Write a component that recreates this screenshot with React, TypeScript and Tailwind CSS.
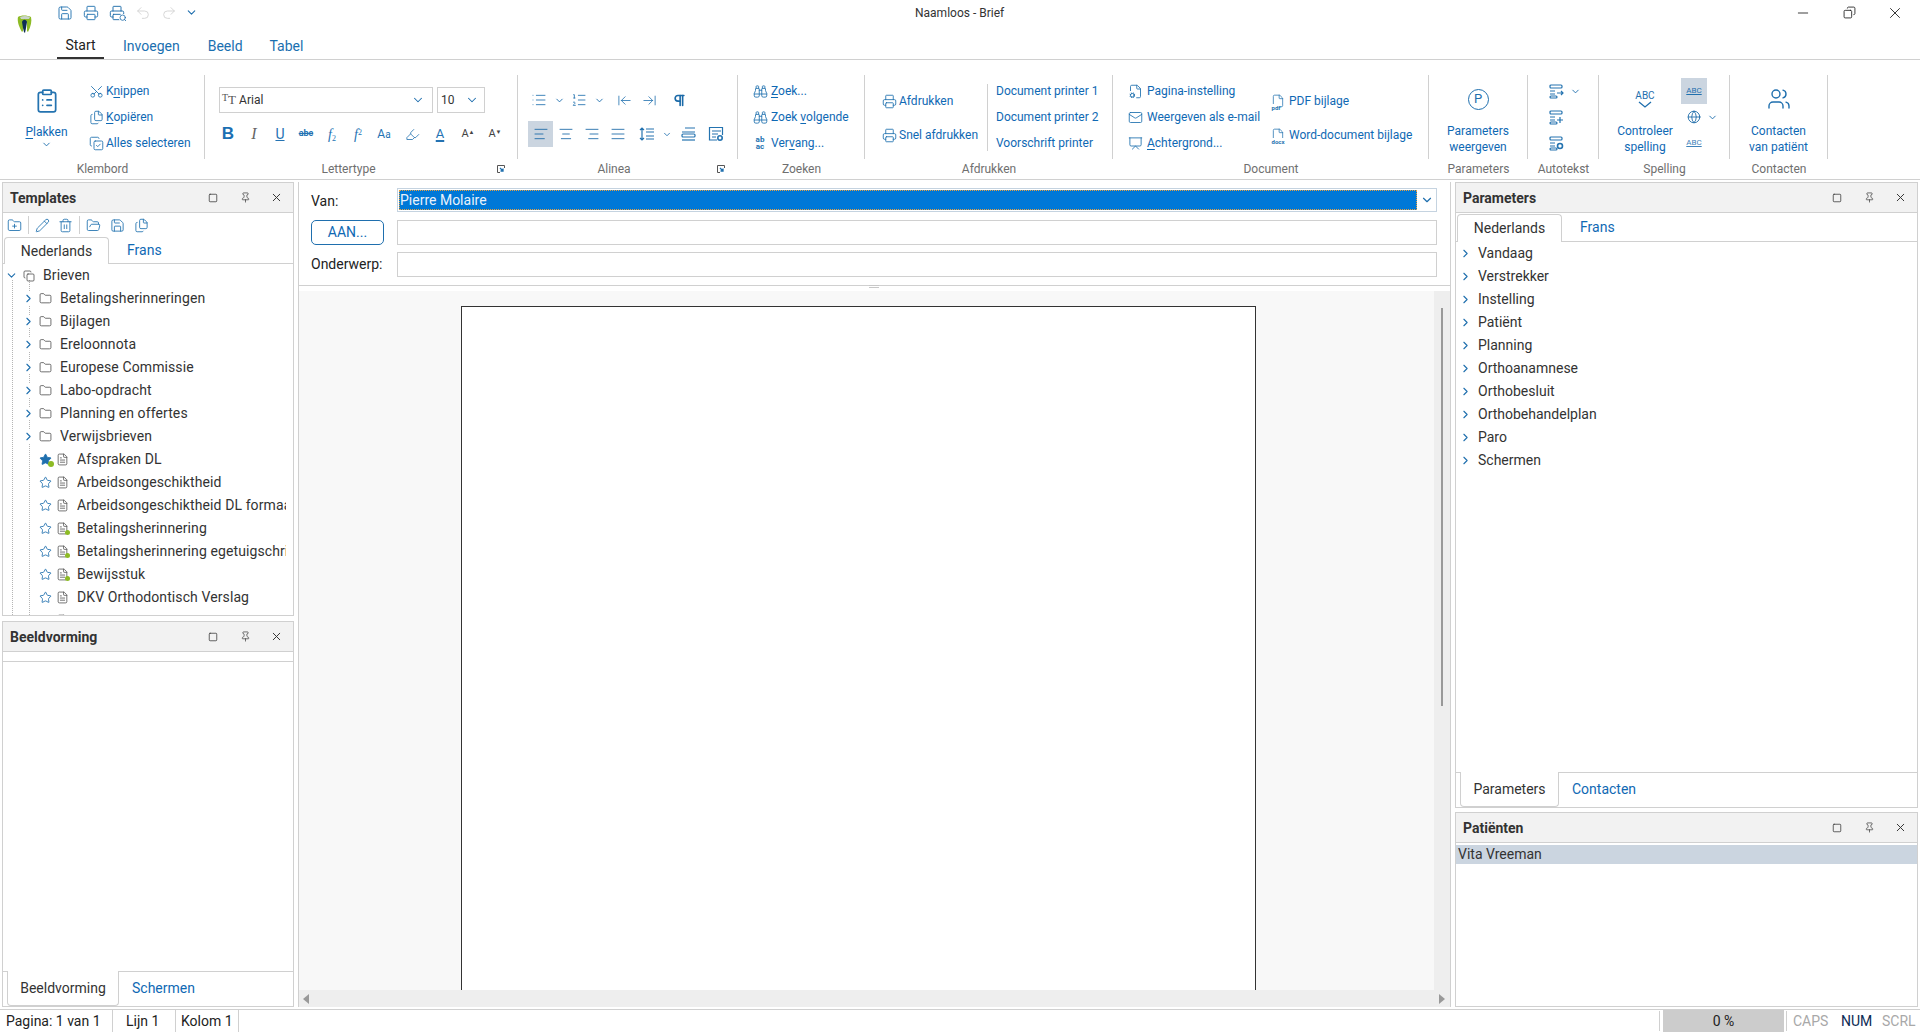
import type { ReactNode } from 'react';
import {
  AlignCenter, AlignJustify, AlignLeft, AlignRight, ArrowLeftToLine, ArrowRightToLine, Binoculars, ChevronDown, ChevronRight,
  ClipboardList, Copy, CopyCheck, File, FileCog, FileText, Files, Folder, FolderOpen, FolderPlus, Globe, Highlighter, List,
  ListOrdered, Mail, Minus, Pencil, Pilcrow, Pin, Presentation, Printer, Redo2, Save, Scissors, Search, Square,
  Star, Trash2, Undo2, Users, X,
} from 'lucide-react';

const iconBlue = '#2473b0';

function Logo() {
  return (
    <svg width="16" height="20" viewBox="0 0 16 20">
      <path d="M1 3c3-2 9-2 13 0 1 4 0 9-3 15l-1-1V8H6v9l-1 1C2 13 0 7 1 3z" fill="#8dbb25" />
      <path d="M3 3c3-1.500 7-1.500 10 0l-1 2H4z" fill="#c9d3c9" />
      <path d="M5 8c1-3 4-3 5 0l-1 6-1 5-1-1-1-4z" fill="#0c2c55" />
    </svg>
  );
}

// stacked lines with a small mark behind them, used by autotekst and alinea buttons
function LinesIcon({ mark }: { mark: 'arrow' | 'plus' | 'gear' }) {
  return (
    <svg width="15" height="15" viewBox="0 0 15 15" fill="none" stroke={iconBlue} strokeWidth="1.200">
      <rect x="1" y="1" width="12" height="3" rx="1" />
      <path d="M1 7h5M1 10h5" />
      <rect x="1" y="12" width="7" height="2" rx="1" />
      {mark === 'arrow' && <path d="M8 9h6M12 7l2 2-2 2" />}
      {mark === 'plus' && <path d="M11 7v6M8 10h6" />}
      {mark === 'gear' && <circle cx="11" cy="10" r="2.500" strokeWidth="1.600" />}
    </svg>
  );
}

function LineSpacingIcon() {
  return (
    <svg width="16" height="14" viewBox="0 0 16 14" fill="none" stroke={iconBlue} strokeWidth="1.200">
      <path d="M3 1v12M1 3l2-2 2 2M1 11l2 2 2-2M7 2h8M7 5h8M7 9h8M7 12h8" />
    </svg>
  );
}

function ParaBoxIcon() {
  return (
    <svg width="15" height="14" viewBox="0 0 15 14" fill="none" stroke={iconBlue} strokeWidth="1.200">
      <path d="M4 1h10M1 5h13" />
      <rect x="1" y="7" width="13" height="3" rx="1" />
      <path d="M1 13h13" />
    </svg>
  );
}

function ParaSettingsIcon() {
  return (
    <svg width="16" height="16" viewBox="0 0 16 16" fill="none" stroke={iconBlue} strokeWidth="1.200">
      <path d="M9 14H1.500V1.500h13V9M4 5h9M4 8h6M4 11h4" />
      <circle cx="12" cy="12" r="2.200" strokeWidth="1.600" />
    </svg>
  );
}

function AttachIcon({ tag }: { tag: string }) {
  return (
    <span className="relative w-[15px] h-[15px] flex justify-center">
      <File size={14} color={iconBlue} strokeWidth={1.3} />
      <span className="absolute left-[1px] bottom-[-2px] bg-white text-[6px] leading-[7px] font-bold text-[#2473b0]">{tag}</span>
    </span>
  );
}

function Shortcut({ children }: { children: ReactNode }) {
  return <span className="underline underline-offset-2">{children}</span>;
}

function SmallItem({ icon, children, h = 'h-[26px]', gap = 'mr-[2px]' }: { icon: ReactNode; children: ReactNode; h?: string; gap?: string }) {
  return (
    <div className={`flex items-center ${h} text-[12px] text-[#0f69b4] whitespace-nowrap`}>
      <span className={`w-[16px] flex justify-center ${gap}`}>{icon}</span>
      <span>{children}</span>
    </div>
  );
}

function BigButton({ icon, lines }: { icon: ReactNode; lines: string[] }) {
  return (
    <div className="flex flex-col items-center pt-[12px] text-[12px] leading-[16px] text-[#0f69b4] text-center whitespace-nowrap">
      <div className="h-[24px] flex items-center justify-center mb-[12px]">{icon}</div>
      {lines.map((l) => (
        <div key={l}>{l}</div>
      ))}
    </div>
  );
}

function Launcher() {
  return (
    <svg width="8" height="8" viewBox="0 0 8 8" className="absolute right-[13px] top-[6px]">
      <path d="M7.500 3V.5H.5v7H3" fill="none" stroke="#555" strokeWidth="1" />
      <path d="M3 3l3 3M6 3.500V6H3.500" fill="none" stroke="#1f6fae" strokeWidth="1.300" />
    </svg>
  );
}

function Group({ width, label, children, launcher, labelPad = '' }: { width: string; label: string; children: ReactNode; launcher?: boolean; labelPad?: string }) {
  return (
    <div className={`${width} flex flex-col shrink-0`}>
      <div className="h-[84px] border-r border-[#d0d0d0] flex">{children}</div>
      <div className={`relative h-[20px] flex items-center justify-center text-[12px] text-[#6f6f6f] ${labelPad}`}>
        {label}
        {launcher && <Launcher />}
      </div>
    </div>
  );
}

function Ribbon() {
  const ic = { size: 15, color: iconBlue, strokeWidth: 1.4 };
  const chev = <ChevronDown size={11} color="#1f6fae" strokeWidth={2} />;
  return (
    <div className="h-[120px] border-b border-[#d0d0d0] pt-[15px] flex">
      <Group width="w-[205px]" label="Klembord">
        <div className="w-[90px] flex flex-col items-center pt-[13px] pl-[3px] text-[12px] text-[#0f69b4]">
          <div className="h-[26px] flex items-center">
            <ClipboardList size={26} color={iconBlue} strokeWidth={1.6} />
          </div>
          <div className="mt-[10px] leading-[16px]">
            <Shortcut>P</Shortcut>lakken
          </div>
          <div className="-mt-[1px]">{chev}</div>
        </div>
        <div className="flex flex-col justify-center -ml-[2px]">
          <SmallItem icon={<Scissors {...ic} className="-rotate-90" />}>
            K<Shortcut>n</Shortcut>ippen
          </SmallItem>
          <SmallItem icon={<Files {...ic} />}>
            <Shortcut>K</Shortcut>opiëren
          </SmallItem>
          <SmallItem icon={<CopyCheck {...ic} />}>Alles selecteren</SmallItem>
        </div>
      </Group>

      <Group width="w-[313px]" label="Lettertype" launcher labelPad="pr-[26px]">
        <div className="pl-[14px] pt-[12px]">
          <div className="flex gap-[4px]">
            <div className="w-[214px] h-[26px] border border-[#d0d0d0] flex items-center justify-between pl-[2px] pr-[7px] text-[12px] text-[#333]">
              <span className="flex items-center">
                <span className="font-['Liberation_Serif',serif] text-[#555] text-[13px] mr-[3px]">
                  <span className="text-[10px] align-top">T</span>T
                </span>
                Arial
              </span>
              <ChevronDown size={14} color="#1f6fae" strokeWidth={1.8} />
            </div>
            <div className="w-[48px] h-[26px] border border-[#d0d0d0] flex items-center justify-between pl-[3px] pr-[5px] text-[12px] text-[#333]">
              10
              <ChevronDown size={14} color="#1f6fae" strokeWidth={1.8} />
            </div>
          </div>
          <div className="flex items-center h-[20px] mt-[11px] -ml-[4px] text-[#2473b3]">
            <span className="w-[26px] text-center text-[17px] font-bold font-['Liberation_Sans',sans-serif] text-[#1b70b3]">B</span>
            <span className="w-[26px] text-center text-[16px] italic font-['Liberation_Serif',serif] text-[#666]">I</span>
            <span className="w-[26px] text-center text-[14px] underline text-[#2473b3]">U</span>
            <span className="w-[26px] text-center text-[9px] font-bold line-through">abc</span>
            <span className="w-[26px] text-center text-[14px] italic font-['Liberation_Serif',serif]">
              f<sub className="text-[8px] not-italic">2</sub>
            </span>
            <span className="w-[26px] text-center text-[14px] italic font-['Liberation_Serif',serif]">
              f<sup className="text-[8px] not-italic">2</sup>
            </span>
            <span className="w-[26px] text-center text-[12px]">
              A<span className="text-[10px]">a</span>
            </span>
            <span className="w-[30px] flex justify-center">
              <Highlighter size={15} color={iconBlue} strokeWidth={1.3} />
            </span>
            <span className="w-[26px] text-center text-[13px] underline decoration-2 underline-offset-2">A</span>
            <span className="w-[30px] text-center text-[11px] text-[#444]">
              A<sup className="text-[6px]">▲</sup>
            </span>
            <span className="w-[24px] text-center text-[11px] text-[#444]">
              A<sup className="text-[6px]">▼</sup>
            </span>
          </div>
        </div>
      </Group>

      <Group width="w-[220px]" label="Alinea" launcher labelPad="pr-[28px]">
        <div className="pl-[10px] pt-[12px]">
          <div className="flex items-center h-[26px] -ml-[2px]">
            <span className="w-[26px] flex justify-center"><List size={16} color={iconBlue} strokeWidth={1.3} /></span>
            <span className="w-[14px] flex justify-center">{chev}</span>
            <span className="w-[26px] flex justify-center"><ListOrdered size={16} color={iconBlue} strokeWidth={1.3} /></span>
            <span className="w-[14px] flex justify-center">{chev}</span>
            <span className="w-[26px] flex justify-center ml-[5px]"><ArrowLeftToLine size={15} color={iconBlue} strokeWidth={1.3} /></span>
            <span className="w-[24px] flex justify-center"><ArrowRightToLine size={15} color={iconBlue} strokeWidth={1.3} /></span>
            <span className="w-[36px] flex justify-center"><Pilcrow size={15} color="#1b6aa8" strokeWidth={2.6} /></span>
          </div>
          <div className="flex items-center h-[26px] mt-[8px]">
            <span className="w-[25px] h-[26px] bg-[#cbd5e0] flex items-center justify-center"><AlignLeft size={16} color="#1b6aa8" strokeWidth={1.3} /></span>
            <span className="w-[26px] flex justify-center"><AlignCenter size={16} color="#1b6aa8" strokeWidth={1.3} /></span>
            <span className="w-[26px] flex justify-center"><AlignRight size={16} color="#1b6aa8" strokeWidth={1.3} /></span>
            <span className="w-[26px] flex justify-center"><AlignJustify size={16} color="#1b6aa8" strokeWidth={1.3} /></span>
            <span className="w-[31px] flex justify-center"><LineSpacingIcon /></span>
            <span className="w-[10px] flex justify-center">{chev}</span>
            <span className="w-[32px] flex justify-center"><ParaBoxIcon /></span>
            <span className="w-[24px] flex justify-center"><ParaSettingsIcon /></span>
          </div>
        </div>
      </Group>

      <Group width="w-[127px]" label="Zoeken">
        <div className="flex flex-col justify-center pl-[14px]">
          <SmallItem gap="mr-[3px]" icon={<Binoculars {...ic} />}>
            <Shortcut>Z</Shortcut>oek...
          </SmallItem>
          <SmallItem gap="mr-[3px]" icon={<Binoculars {...ic} />}>
            Zoek <Shortcut>v</Shortcut>olgende
          </SmallItem>
          <SmallItem gap="mr-[3px]" icon={<span className="text-[8px] leading-[7px] font-bold text-[#2473b0] text-center">ab<br />ac</span>}>
            Ver<Shortcut>v</Shortcut>ang...
          </SmallItem>
        </div>
      </Group>

      <Group width="w-[248px]" label="Afdrukken">
        <div className="flex flex-col justify-center pt-[2px] pl-[16px] w-[122px]">
          <SmallItem h="h-[34px]" icon={<Printer {...ic} />}>Afdrukken</SmallItem>
          <SmallItem h="h-[34px]" icon={<Printer {...ic} />}>Snel afdrukken</SmallItem>
        </div>
        <div className="h-[67px] self-center border-l border-[#d0d0d0]" />
        <div className="pl-[8px] flex flex-col justify-center text-[12px] text-[#0f69b4] whitespace-nowrap">
          <div className="h-[26px] flex items-center">Document printer 1</div>
          <div className="h-[26px] flex items-center">Document printer 2</div>
          <div className="h-[26px] flex items-center">Voorschrift printer</div>
        </div>
      </Group>

      <Group width="w-[316px]" label="Document">
        <div className="flex flex-col justify-center pl-[14px] w-[157px]">
          <SmallItem gap="mr-[4px]" icon={<FileCog {...ic} />}>Pagina-instelling</SmallItem>
          <SmallItem gap="mr-[4px]" icon={<Mail {...ic} />}>Weergeven als e-mail</SmallItem>
          <SmallItem gap="mr-[4px]" icon={<Presentation {...ic} />}>
            <Shortcut>A</Shortcut>chtergrond...
          </SmallItem>
        </div>
        <div className="flex flex-col justify-center pt-[2px]">
          <SmallItem h="h-[34px]" gap="mr-[3px]" icon={<AttachIcon tag="pdf" />}>PDF bijlage</SmallItem>
          <SmallItem h="h-[34px]" gap="mr-[3px]" icon={<AttachIcon tag="docx" />}>Word-document bijlage</SmallItem>
        </div>
      </Group>

      <Group width="w-[99px]" label="Parameters">
        <div className="w-full">
          <BigButton
            icon={
              <span className="w-[21px] h-[21px] rounded-full border-[1.5px] border-[#1f6fae] flex items-center justify-center text-[13px] text-[#1f6fae]">P</span>
            }
            lines={['Parameters', 'weergeven']}
          />
        </div>
      </Group>

      <Group width="w-[71px]" label="Autotekst">
        <div className="flex flex-col justify-center pl-[21px]">
          <div className="h-[26px] flex items-center gap-[6px]">
            <LinesIcon mark="arrow" />
            {chev}
          </div>
          <div className="h-[26px] flex items-center">
            <LinesIcon mark="plus" />
          </div>
          <div className="h-[26px] flex items-center">
            <LinesIcon mark="gear" />
          </div>
        </div>
      </Group>

      <Group width="w-[131px]" label="Spelling">
        <div className="w-[92px] -mr-[10px]">
          <BigButton
            icon={
              <span className="flex flex-col items-center text-[10px] leading-[10px] text-[#1f6fae]">
                ABC
                <svg width="14" height="7" viewBox="0 0 14 7">
                  <path d="M1 1l6 5 6-5" fill="none" stroke="#1f6fae" strokeWidth="1.300" />
                </svg>
              </span>
            }
            lines={['Controleer', 'spelling']}
          />
        </div>
        <div className="flex flex-col justify-center">
          <div className="w-[26px] h-[26px] bg-[#cbd5e0] flex items-center justify-center text-[8px] text-[#1f6fae] underline">ABC</div>
          <div className="h-[26px] flex items-center gap-[6px] pl-[6px] w-[44px]">
            <Globe size={14} color="#1b6aa8" strokeWidth={1.5} />
            {chev}
          </div>
          <div className="w-[26px] h-[26px] flex items-center justify-center text-[8px] text-[#3f83ba] underline">ABC</div>
        </div>
      </Group>

      <Group width="w-[98px]" label="Contacten">
        <div className="w-full">
          <BigButton icon={<Users size={24} color="#1f6fae" strokeWidth={1.4} />} lines={['Contacten', 'van patiënt']} />
        </div>
      </Group>
    </div>
  );
}

function PanelHeader({ title }: { title: string }) {
  return (
    <div className="h-[30px] shrink-0 bg-[#f2f2f2] border-b border-[#d0d0d0] flex items-center pl-[7px] text-[14px] font-bold text-[#333]">
      <span className="flex-1 pt-[1px]">{title}</span>
      <span className="w-[32px] flex justify-center"><Square size={10} color="#333" strokeWidth={1.8} /></span>
      <span className="w-[32px] flex justify-center"><Pin size={11} color="#333" strokeWidth={1.5} /></span>
      <span className="w-[32px] pr-[1px] flex justify-center"><X size={13} color="#333" strokeWidth={1.8} /></span>
    </div>
  );
}

function TopTabs({ active, other, tall }: { active: string; other: string; tall?: boolean }) {
  return (
    <div className={`${tall ? 'h-[29px]' : 'h-[27px]'} shrink-0 flex items-end border-b border-[#d0d0d0] text-[14px] pl-[1px]`}>
      <div className={`w-[105px] ${tall ? 'h-[28px]' : 'h-[27px]'} -mb-[1px] bg-white border border-b-0 border-[#d0d0d0] rounded-t-[4px] flex items-center justify-center text-[#333]`}>{active}</div>
      <div className={`${tall ? 'h-[27px]' : 'h-[26px]'} pl-[18px] flex items-center text-[#0f69b4]`}>{other}</div>
    </div>
  );
}

function BottomTabs({ active, other, w }: { active: string; other: string; w: string }) {
  return (
    <div className="h-[35px] shrink-0 flex items-start border-t border-[#d0d0d0] text-[14px] pl-[4px]">
      <div className={`${w} h-[35px] -mt-[1px] bg-white border border-t-0 border-[#d0d0d0] rounded-b-[4px] flex items-center justify-center text-[#333]`}>{active}</div>
      <div className="h-[33px] pl-[13px] flex items-center text-[#0f69b4]">{other}</div>
    </div>
  );
}

const folders = ['Betalingsherinneringen', 'Bijlagen', 'Ereloonnota', 'Europese Commissie', 'Labo-opdracht', 'Planning en offertes', 'Verwijsbrieven'];
const leaves = [
  { name: 'Afspraken DL', fav: true, dot: false },
  { name: 'Arbeidsongeschiktheid', fav: false, dot: false },
  { name: 'Arbeidsongeschiktheid DL formaat', fav: false, dot: false },
  { name: 'Betalingsherinnering', fav: false, dot: true },
  { name: 'Betalingsherinnering egetuigschrift', fav: false, dot: true },
  { name: 'Bewijsstuk', fav: false, dot: true },
  { name: 'DKV Orthodontisch Verslag', fav: false, dot: false },
];
const params = ['Vandaag', 'Verstrekker', 'Instelling', 'Patiënt', 'Planning', 'Orthoanamnese', 'Orthobesluit', 'Orthobehandelplan', 'Paro', 'Schermen'];

function TemplateTree() {
  return (
    <div className="relative flex-1 overflow-hidden text-[14px] tracking-[0.1px] text-[#333]">
      <div className="absolute left-[9px] top-[16px] bottom-0 border-l border-dotted border-[#b5b5b5]" />
      <div className="absolute left-[26px] top-[16px] bottom-0 border-l border-dotted border-[#b5b5b5]" />
      <div className="relative flex items-center h-[23px]">
        <span className="w-[17px] flex justify-center"><ChevronDown size={13} color="#1f6fae" strokeWidth={2} /></span>
        <span className="w-[17px] flex justify-center"><Copy size={12} color="#444" strokeWidth={1.5} /></span>
        <span className="ml-[6px]">Brieven</span>
      </div>
      {folders.map((f) => (
        <div key={f} className="relative flex items-center h-[23px] pl-[17px]">
          <span className="w-[17px] flex justify-center"><ChevronRight size={13} color="#1f6fae" strokeWidth={2} className="bg-white" /></span>
          <span className="w-[17px] flex justify-center"><Folder size={13} color="#444" strokeWidth={1.4} /></span>
          <span className="ml-[6px]">{f}</span>
        </div>
      ))}
      {leaves.map((l) => (
        <div key={l.name} className="relative flex items-center h-[23px] pl-[34px]">
          <span className="relative w-[17px] flex justify-center">
            <Star size={13} color="#1f6fae" fill={l.fav ? '#1f6fae' : 'none'} strokeWidth={1.6} />
            {l.fav && <span className="absolute right-[0px] bottom-[-1px] w-[6px] h-[6px] rounded-full bg-[#8dbb25]" />}
          </span>
          <span className="relative w-[17px] flex justify-center">
            <FileText size={13} color="#555" strokeWidth={1.5} />
            {l.dot && <span className="absolute right-[1px] bottom-[0px] w-[5px] h-[5px] rounded-full bg-[#8dbb25]" />}
          </span>
          <span className="ml-[6px] w-[209px] overflow-hidden whitespace-nowrap">{l.name}</span>
        </div>
      ))}
      <div className="relative flex items-center h-[23px] pl-[51px]">
        <span className="w-[17px] flex justify-center"><FileText size={13} color="#666" strokeWidth={1.4} /></span>
      </div>
    </div>
  );
}

function LeftColumn() {
  const ic = { size: 15, color: iconBlue, strokeWidth: 1.4 };
  return (
    <div className="w-[292px] ml-[2px] shrink-0 flex flex-col gap-[5px]">
      <div className="h-[434px] border border-[#d0d0d0] flex flex-col">
        <PanelHeader title="Templates" />
        <div className="h-[24px] shrink-0 flex items-center pl-[3px]">
          <span className="w-[16px] flex justify-center"><FolderPlus {...ic} /></span>
          <span className="h-[18px] border-l border-[#d0d0d0] ml-[6px] mr-[5px]" />
          <span className="w-[16px] flex justify-center"><Pencil {...ic} /></span>
          <span className="w-[16px] ml-[7px] flex justify-center"><Trash2 {...ic} /></span>
          <span className="h-[18px] border-l border-[#d0d0d0] ml-[6px] mr-[5px]" />
          <span className="w-[16px] flex justify-center"><FolderOpen {...ic} /></span>
          <span className="w-[16px] ml-[8px] flex justify-center"><Save {...ic} /></span>
          <span className="w-[16px] ml-[8px] flex justify-center"><Files {...ic} /></span>
        </div>
        <TopTabs active="Nederlands" other="Frans" />
        <TemplateTree />
      </div>
      <div className="flex-1 border border-[#d0d0d0] flex flex-col">
        <PanelHeader title="Beeldvorming" />
        <div className="h-[10px] border-b border-[#d0d0d0]" />
        <div className="flex-1" />
        <BottomTabs active="Beeldvorming" other="Schermen" w="w-[112px]" />
      </div>
    </div>
  );
}

function CenterColumn() {
  return (
    <div className="w-[1153px] ml-[4px] shrink-0 border-x border-[#d0d0d0] flex flex-col text-[14px]">
      <div className="h-[104px] shrink-0 border-b border-[#d0d0d0] pl-[12px] pr-[13px] pt-[6px]">
        <div className="flex items-center h-[24px]">
          <span className="w-[86px] pt-[2px] text-[#222]">Van:</span>
          <div className="flex-1 h-[24px] border border-[#c5d3e0] flex items-stretch">
            <div className="flex-1 m-[1px] bg-[#0078d7] outline-1 outline-dotted outline-[#e8a040] -outline-offset-1 pl-[1px] flex items-center text-[#e9f2fb]">Pierre Molaire</div>
            <div className="w-[18px] flex items-center justify-center"><ChevronDown size={14} color="#1f6fae" strokeWidth={2} /></div>
          </div>
        </div>
        <div className="flex items-center h-[25px] mt-[8px]">
          <div className="w-[73px] h-[25px] mr-[13px] border border-[#1f6fae] rounded-[5px] flex items-center justify-center text-[#0f69b4]">AAN...</div>
          <div className="flex-1 h-[25px] border border-[#d0d0d0]" />
        </div>
        <div className="flex items-center h-[25px] mt-[7px]">
          <span className="w-[86px] text-[#222]">Onderwerp:</span>
          <div className="flex-1 h-[25px] border border-[#d0d0d0]" />
        </div>
      </div>
      <div className="h-[5px] shrink-0 relative">
        <div className="absolute left-[570px] top-[-1px] w-[10px] h-[3px] border-y border-[#c8c8c8]" />
      </div>
      <div className="flex-1 min-h-0 flex flex-col bg-[#f8f8f8]">
        <div className="flex-1 min-h-0 flex">
          <div className="flex-1 flex flex-col pl-[162px] pt-[15px]">
            <div className="w-[795px] flex-1 bg-white border-x border-t border-[#333]" />
          </div>
          <div className="w-[16px] bg-[#eeeeee] flex justify-center pt-[17px]">
            <div className="w-[2px] h-[398px] bg-[#999]" />
          </div>
        </div>
        <div className="h-[17px] shrink-0 bg-[#eeeeee] flex items-center justify-between px-[4px]">
          <span className="w-0 h-0 border-y-[5px] border-y-transparent border-r-[6px] border-r-[#999]" />
          <span className="w-0 h-0 border-y-[5px] border-y-transparent border-l-[6px] border-l-[#999] mr-[1px]" />
        </div>
      </div>
    </div>
  );
}

function RightColumn() {
  return (
    <div className="w-[463px] ml-[4px] shrink-0 flex flex-col gap-[4px]">
      <div className="h-[626px] border border-[#d0d0d0] flex flex-col">
        <PanelHeader title="Parameters" />
        <TopTabs active="Nederlands" other="Frans" tall />
        <div className="flex-1 text-[14px] text-[#333]">
          {params.map((p) => (
            <div key={p} className="flex items-center h-[23px] pl-[1px]">
              <span className="w-[16px] flex justify-center"><ChevronRight size={13} color="#1f6fae" strokeWidth={2} /></span>
              <span className="ml-[5px]">{p}</span>
            </div>
          ))}
        </div>
        <BottomTabs active="Parameters" other="Contacten" w="w-[99px]" />
      </div>
      <div className="flex-1 border border-[#d0d0d0] flex flex-col">
        <PanelHeader title="Patiënten" />
        <div className="h-[19px] mt-[2px] bg-[#cbd5e0] pl-[2px] flex items-center text-[14px] text-[#333]">Vita Vreeman</div>
      </div>
    </div>
  );
}

function StatusBar() {
  return (
    <div className="h-[23px] shrink-0 border-t border-[#d0d0d0] flex items-stretch text-[14px] text-[#222]">
      <div className="w-[113px] pl-[6px] border-r border-[#d0d0d0] flex items-center">Pagina: 1 van 1</div>
      <div className="w-[63px] pl-[13px] border-r border-[#d0d0d0] flex items-center">Lijn 1</div>
      <div className="w-[63px] pl-[5px] border-r border-[#d0d0d0] flex items-center">Kolom 1</div>
      <div className="flex-1" />
      <div className="border-l border-[#d0d0d0] w-[4px] my-[1px]" />
      <div className="w-[121px] bg-[#cccccc] flex items-center justify-center">0 %</div>
      <div className="border-r border-[#d0d0d0] w-[3px] my-[1px]" />
      <div className="w-[6px]" />
      <div className="w-[48px] flex items-center text-[#a8a8a8]">CAPS</div>
      <div className="w-[41px] flex items-center text-[#0c2c55]">NUM</div>
      <div className="w-[38px] flex items-center text-[#a8a8a8]">SCRL</div>
    </div>
  );
}

export default function App() {
  const qat = { size: 16, strokeWidth: 1.4 };
  return (
    <div className="w-[1920px] h-[1032px] overflow-hidden bg-white flex flex-col font-['Roboto',sans-serif]">
      <div className="h-[30px] shrink-0 flex relative pb-[5px]">
        <div className="absolute left-[17px] top-[14px]"><Logo /></div>
        <div className="w-[800px] pl-[57px] flex items-center gap-[10px]">
          <Save {...qat} color={iconBlue} />
          <Printer {...qat} color={iconBlue} />
          <span className="relative">
            <Printer {...qat} color="#1b6aa8" />
            <Search size={8} color="#1b6aa8" strokeWidth={2.4} className="absolute -right-[2px] -bottom-[1px] bg-white rounded-full" />
          </span>
          <Undo2 {...qat} color="#d4d4d4" />
          <Redo2 {...qat} color="#d4d4d4" />
          <ChevronDown size={13} color="#1f6fae" strokeWidth={2} className="-ml-[2px]" />
        </div>
        <div className="flex-1 flex justify-start items-center pl-[115px] text-[12px] text-[#333]">Naamloos - Brief</div>
        <div className="flex items-center pr-[2px]">
          <span className="w-[46px] flex justify-center"><Minus size={16} color="#222" strokeWidth={1.3} /></span>
          <span className="w-[46px] flex justify-center"><Copy size={13} color="#222" strokeWidth={1.6} className="-scale-x-100" /></span>
          <span className="w-[46px] flex justify-center"><X size={18} color="#222" strokeWidth={1.2} /></span>
        </div>
      </div>
      <div className="h-[30px] shrink-0 border-b border-[#d0d0d0] flex pl-[57px] text-[14px] text-[#1a6fb0]">
        <div className="w-[47px] pt-[3px] border-b-[2px] border-[#333] flex items-center justify-center text-[#222]">Start</div>
        <div className="ml-[19px] pt-[3px] flex items-center">Invoegen</div>
        <div className="ml-[28px] pt-[3px] flex items-center">Beeld</div>
        <div className="ml-[27px] pt-[3px] flex items-center">Tabel</div>
      </div>
      <Ribbon />
      <div className="flex-1 min-h-0 flex pt-[2px] pb-[2px]">
        <LeftColumn />
        <CenterColumn />
        <RightColumn />
      </div>
      <StatusBar />
    </div>
  );
}
